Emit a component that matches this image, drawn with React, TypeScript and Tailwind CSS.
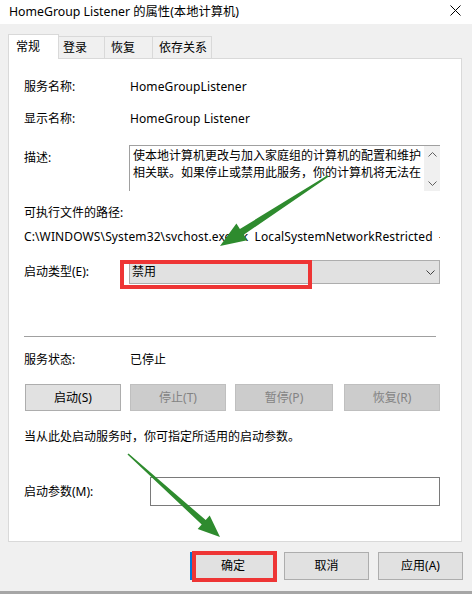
import React from "react";

const Row = ({ label, children, labelW = "w-[106px]", h = "h-[18px]" }: { label: string; children?: React.ReactNode; labelW?: string; h?: string }) => (
  <div className={`flex items-center ${h}`}>
    <div className={`${labelW} shrink-0`}>{label}</div>
    {children}
  </div>
);

export default function App() {
  return (
    <div className="relative w-[472px] h-[594px] overflow-hidden bg-[#f0f0f0] text-[12px] text-black font-['Noto_Sans','Noto_Sans_CJK_SC',sans-serif] leading-[18px]">
      {/* title bar */}
      <div className="h-[24px] bg-white flex items-center justify-between pl-[9px] pr-[11px]">
        <div className="text-[12.3px] leading-[18px] whitespace-nowrap">HomeGroup Listener 的属性(本地计算机)</div>
        <svg width="11" height="11" viewBox="0 0 11 11" className="mb-[4px]">
          <path d="M0.5 0.5 L10.5 10.5 M10.5 0.5 L0.5 10.5" stroke="#000" strokeWidth="1" fill="none" />
        </svg>
      </div>

      {/* tabs */}
      <div className="mt-[10px] pl-[8px] flex items-start h-[25px] -mb-px">
        <div className="relative z-10 w-[51px] h-[25px] bg-white border border-b-0 border-[#d9d9d9] pl-[7px] pt-[3px]">常规</div>
        <div className="mt-[2px] w-[46px] h-[22px] border-t border-r border-[#d9d9d9] pl-[4px] pt-[2px]">登录</div>
        <div className="mt-[2px] w-[48px] h-[22px] border-t border-r border-[#d9d9d9] pl-[6px] pt-[2px]">恢复</div>
        <div className="mt-[2px] w-[59px] h-[22px] border-t border-r border-[#d9d9d9] pl-[6px] pt-[2px]">依存关系</div>
      </div>

      {/* panel */}
      <div className="ml-[8px] w-[454px] h-[484px] bg-white border border-[#d9d9d9] pl-[15px] flex flex-col">
        <div className="h-[19px] shrink-0" />
        <Row label="服务名称:"><span className="tracking-[0.1px]">HomeGroupListener</span></Row>
        <div className="h-[14px] shrink-0" />
        <Row label="显示名称:"><span className="tracking-[0.1px]">HomeGroup Listener</span></Row>
        <div className="h-[17px] shrink-0" />
        <div className="flex h-[46px]">
          <div className="w-[105px] shrink-0 pt-[4px]">描述:</div>
          <div className="w-[311px] h-[46px] border-t border-l border-[#a0a0a0] flex">
            <div className="flex-1 pl-[3px] pt-[1px] leading-[17px] whitespace-nowrap overflow-hidden">
              <div>使本地计算机更改与加入家庭组的计算机的配置和维护</div>
              <div>相关联。如果停止或禁用此服务，你的计算机将无法在</div>
            </div>
            <div className="w-[16px] bg-[#f0f0f0] flex flex-col items-center justify-between pt-[6px] pb-[5px]">
              <svg width="9" height="5" viewBox="0 0 9 5"><path d="M0.5 4.5 L4.5 0.5 L8.5 4.5" stroke="#606060" fill="none" /></svg>
              <svg width="9" height="5" viewBox="0 0 9 5"><path d="M0.5 0.5 L4.5 4.5 L8.5 0.5" stroke="#606060" fill="none" /></svg>
            </div>
          </div>
        </div>
        <div className="h-[13px] shrink-0" />
        <div className="h-[18px] flex items-center">可执行文件的路径:</div>
        <div className="h-[6px] shrink-0" />
        <div className="h-[18px] flex items-center w-[416px] overflow-hidden whitespace-nowrap tracking-[0.12px] [word-spacing:3px]">C:\WINDOWS\System32\svchost.exe -k LocalSystemNetworkRestricted -p</div>
        <div className="h-[14px] shrink-0" />
        <div className="flex items-center h-[24px]">
          <div className="w-[105px] shrink-0">启动类型(E):</div>
          <div className="w-[311px] h-[24px] bg-[#e1e1e1] border border-[#adadad] flex items-center justify-between pl-[2px] pr-[4px]">
            <span>禁用</span>
            <svg width="9" height="5" viewBox="0 0 9 5"><path d="M0.5 0.5 L4.5 4.5 L8.5 0.5" stroke="#404040" fill="none" /></svg>
          </div>
        </div>
        <div className="h-[52px] shrink-0" />
        <div className="h-px w-[412px] bg-[#a0a0a0]" />
        <div className="h-[14px] shrink-0" />
        <Row label="服务状态:">已停止</Row>
        <div className="h-[15px] shrink-0" />
        <div className="flex h-[27px] pl-[1px]">
          <div className="w-[96px] h-[27px] bg-[#e1e1e1] border border-[#adadad] flex items-center justify-center">启动(S)</div>
          <div className="ml-[9px] w-[96px] h-[27px] bg-[#cccccc] border border-[#bfbfbf] text-[#838383] flex items-center justify-center">停止(T)</div>
          <div className="ml-[9px] w-[98px] h-[27px] bg-[#cccccc] border border-[#bfbfbf] text-[#838383] flex items-center justify-center">暂停(P)</div>
          <div className="ml-[11px] w-[96px] h-[27px] bg-[#cccccc] border border-[#bfbfbf] text-[#838383] flex items-center justify-center">恢复(R)</div>
        </div>
        <div className="h-[17px] shrink-0" />
        <div className="h-[18px] flex items-center">当从此处启动服务时，你可指定所适用的启动参数。</div>
        <div className="h-[31px] shrink-0" />
        <div className="flex items-center h-[29px]">
          <div className="w-[126px] shrink-0">启动参数(M):</div>
          <div className="w-[290px] h-[29px] border border-[#7a7a7a] bg-white" />
        </div>
      </div>

      {/* bottom buttons */}
      <div className="mt-[10px] flex pl-[190px]">
        <div className="w-[86px] h-[28px] bg-[#e1e1e1] border-2 border-[#0078d7] flex items-center justify-center">确定</div>
        <div className="ml-[8px] w-[85px] h-[28px] bg-[#e1e1e1] border border-[#adadad] flex items-center justify-center">取消</div>
        <div className="ml-[9px] w-[85px] h-[28px] bg-[#e1e1e1] border border-[#adadad] flex items-center justify-center">应用(A)</div>
      </div>

      {/* window edges */}
      <div className="absolute left-0 right-0 bottom-0 h-[3px] bg-[#a6a6a6]" />

      {/* annotations */}
      <svg className="absolute inset-0 pointer-events-none" width="472" height="594" viewBox="0 0 472 594">
        <rect x="122" y="262" width="188" height="25" fill="none" stroke="#ee3535" strokeWidth="4" />
        <rect x="194" y="553" width="81" height="27" fill="none" stroke="#ee3535" strokeWidth="4" />
        <polygon
          points="328.4,176.7 243.7,234.8 247.2,240.3 220,246 236.4,223.5 239.9,229 327.6,175.3"
          fill="#2e8b2e"
        />
        <polygon
          points="127.5,454.5 201.7,524.5 197.7,529 220,537 209.7,515.6 205.7,520.1 128.5,453.5"
          fill="#2e8b2e"
        />
      </svg>
    </div>
  );
}
